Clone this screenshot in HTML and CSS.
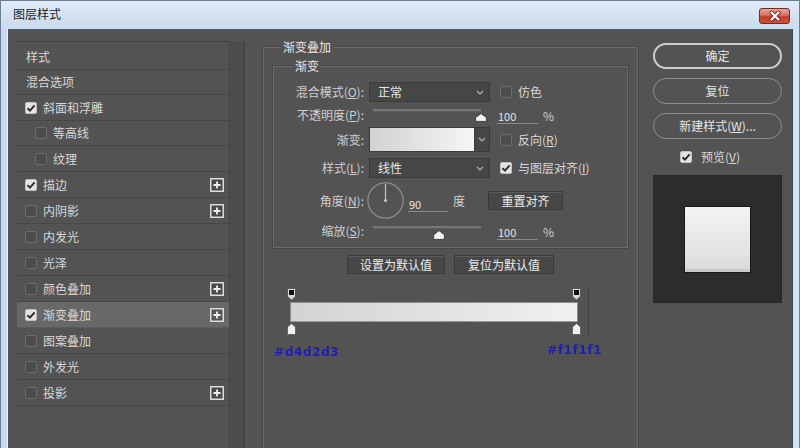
FILE: index.html
```html
<!DOCTYPE html>
<html lang="zh-CN">
<head>
<meta charset="utf-8">
<title>图层样式</title>
<link rel="stylesheet" href="styles.css">
</head>
<body>
<div class="window">
  <div class="titlebar">
    <span class="title">图层样式</span>
    <span class="close">
      <svg width="28" height="14" viewBox="0 0 28 14"><path d="M10.5 3.5 L17.5 10.5 M17.5 3.5 L10.5 10.5" stroke="#6b241c" stroke-width="4" stroke-linecap="round"/><path d="M10.5 3.5 L17.5 10.5 M17.5 3.5 L10.5 10.5" stroke="#ffffff" stroke-width="2.2" stroke-linecap="round"/></svg>
    </span>
  </div>
  <div class="frame">
    <div class="body">
      <div class="left">
        <div class="list">
          <div class="row head">样式</div>
          <div class="row head">混合选项</div>
          <div class="row"><span class="cb on"><svg width="12" height="12" viewBox="0 0 12 12"><path d="M2.5 6.2 L5 8.6 L9.6 3.4" fill="none" stroke="#2e2e2e" stroke-width="2"/></svg></span><span class="rt">斜面和浮雕</span></div>
          <div class="row sub"><span class="cb"></span><span class="rt">等高线</span></div>
          <div class="row sub"><span class="cb"></span><span class="rt">纹理</span></div>
          <div class="row"><span class="cb on"><svg width="12" height="12" viewBox="0 0 12 12"><path d="M2.5 6.2 L5 8.6 L9.6 3.4" fill="none" stroke="#2e2e2e" stroke-width="2"/></svg></span><span class="rt">描边</span><span class="plus"><svg width="14" height="14" viewBox="0 0 14 14"><rect x="0.75" y="0.75" width="12.5" height="12.5" fill="#4a4a4a" stroke="#dcdcdc" stroke-width="1.5"/><path d="M7 3.5 V10.5 M3.5 7 H10.5" stroke="#f0f0f0" stroke-width="1.8"/></svg></span></div>
          <div class="row"><span class="cb"></span><span class="rt">内阴影</span><span class="plus"><svg width="14" height="14" viewBox="0 0 14 14"><rect x="0.75" y="0.75" width="12.5" height="12.5" fill="#4a4a4a" stroke="#dcdcdc" stroke-width="1.5"/><path d="M7 3.5 V10.5 M3.5 7 H10.5" stroke="#f0f0f0" stroke-width="1.8"/></svg></span></div>
          <div class="row"><span class="cb"></span><span class="rt">内发光</span></div>
          <div class="row"><span class="cb"></span><span class="rt">光泽</span></div>
          <div class="row"><span class="cb"></span><span class="rt">颜色叠加</span><span class="plus"><svg width="14" height="14" viewBox="0 0 14 14"><rect x="0.75" y="0.75" width="12.5" height="12.5" fill="#4a4a4a" stroke="#dcdcdc" stroke-width="1.5"/><path d="M7 3.5 V10.5 M3.5 7 H10.5" stroke="#f0f0f0" stroke-width="1.8"/></svg></span></div>
          <div class="row sel"><span class="cb on"><svg width="12" height="12" viewBox="0 0 12 12"><path d="M2.5 6.2 L5 8.6 L9.6 3.4" fill="none" stroke="#2e2e2e" stroke-width="2"/></svg></span><span class="rt">渐变叠加</span><span class="plus"><svg width="14" height="14" viewBox="0 0 14 14"><rect x="0.75" y="0.75" width="12.5" height="12.5" fill="#555" stroke="#dcdcdc" stroke-width="1.5"/><path d="M7 3.5 V10.5 M3.5 7 H10.5" stroke="#f0f0f0" stroke-width="1.8"/></svg></span></div>
          <div class="row"><span class="cb"></span><span class="rt">图案叠加</span></div>
          <div class="row"><span class="cb"></span><span class="rt">外发光</span></div>
          <div class="row"><span class="cb"></span><span class="rt">投影</span><span class="plus"><svg width="14" height="14" viewBox="0 0 14 14"><rect x="0.75" y="0.75" width="12.5" height="12.5" fill="#4a4a4a" stroke="#dcdcdc" stroke-width="1.5"/><path d="M7 3.5 V10.5 M3.5 7 H10.5" stroke="#f0f0f0" stroke-width="1.8"/></svg></span></div>
        </div>
        <div class="strip"></div>
      </div>

      <div class="middle">
        <div class="group outer">
          <span class="gtitle outer-title">渐变叠加</span>
          <div class="group inner">
            <span class="gtitle inner-title">渐变</span>

            <div class="field f1">
              <span class="lbl">混合模式(<u>O</u>):</span>
              <div class="select"><span>正常</span><svg width="8" height="5" viewBox="0 0 8 5"><path d="M1 1 L4 4 L7 1" fill="none" stroke="#b4b4b4" stroke-width="1.2"/></svg></div>
              <span class="cb opt"></span><span class="opttext">仿色</span>
            </div>

            <div class="field f2">
              <span class="lbl">不透明度(<u>P</u>):</span>
              <div class="slider">
                <div class="track"></div>
                <svg class="thumb" style="margin-left:102px" width="12" height="9" viewBox="0 0 12 9"><path d="M6 0.6 L11.4 4.5 V8.4 H0.6 V4.5 Z" fill="#f4f4f4" stroke="#333" stroke-width="0.9"/></svg>
              </div>
              <span class="num">100</span><span class="unit">%</span>
            </div>

            <div class="field f3">
              <span class="lbl">渐变:</span>
              <div class="swatch"><div class="grad"></div><div class="arr"><svg width="8" height="5" viewBox="0 0 8 5"><path d="M1 1 L4 4 L7 1" fill="none" stroke="#b4b4b4" stroke-width="1.2"/></svg></div></div>
              <span class="cb opt"></span><span class="opttext">反向(<u>R</u>)</span>
            </div>

            <div class="field f4">
              <span class="lbl">样式(<u>L</u>):</span>
              <div class="select"><span>线性</span><svg width="8" height="5" viewBox="0 0 8 5"><path d="M1 1 L4 4 L7 1" fill="none" stroke="#b4b4b4" stroke-width="1.2"/></svg></div>
              <span class="cb opt on"><svg width="12" height="12" viewBox="0 0 12 12"><path d="M2.5 6.2 L5 8.6 L9.6 3.4" fill="none" stroke="#2e2e2e" stroke-width="2"/></svg></span><span class="opttext">与图层对齐(<u>I</u>)</span>
            </div>

            <div class="field f5">
              <span class="lbl">角度(<u>N</u>):</span>
              <svg class="dial" width="37" height="37" viewBox="0 0 37 37"><circle cx="18.5" cy="18.5" r="17.6" fill="none" stroke="#8c8c8c" stroke-width="1.3"/><path d="M18.5 18.5 V2" stroke="#bdbdbd" stroke-width="1.3"/><circle cx="18.5" cy="18.5" r="1.6" fill="#c4c4c4"/></svg>
              <span class="num deg">90</span><span class="unit">度</span>
              <span class="btn reset">重置对齐</span>
            </div>

            <div class="field f6">
              <span class="lbl">缩放(<u>S</u>):</span>
              <div class="slider">
                <div class="track"></div>
                <svg class="thumb" style="margin-left:60px" width="12" height="10" viewBox="0 0 12 10"><path d="M6 0.6 L11.4 4.8 V9.4 H0.6 V4.8 Z" fill="#f4f4f4" stroke="#333" stroke-width="0.9"/></svg>
              </div>
              <span class="num">100</span><span class="unit">%</span>
            </div>
          </div>

          <div class="defaults">
            <span class="btn d1">设置为默认值</span>
            <span class="btn d2">复位为默认值</span>
          </div>

          <div class="editor">
            <div class="gwrap">
              <div class="stops">
                <svg width="9" height="13" viewBox="0 0 9 13"><path d="M1.5 0.5 H7.5 A1 1 0 0 1 8.5 1.5 V8.5 L4.5 12 L0.5 8.5 V1.5 A1 1 0 0 1 1.5 0.5 Z" fill="#d8d8d8" stroke="#4a4a4a" stroke-width="0.8"/><rect x="2" y="2" width="5" height="5" fill="#111"/></svg>
                <svg width="9" height="13" viewBox="0 0 9 13"><path d="M1.5 0.5 H7.5 A1 1 0 0 1 8.5 1.5 V8.5 L4.5 12 L0.5 8.5 V1.5 A1 1 0 0 1 1.5 0.5 Z" fill="#d8d8d8" stroke="#4a4a4a" stroke-width="0.8"/><rect x="2" y="2" width="5" height="5" fill="#111"/></svg>
              </div>
              <div class="bar"></div>
              <div class="stops bottom">
                <svg width="9" height="12" viewBox="0 0 9 12"><path d="M4.5 0.5 L8.5 4 V11.5 H0.5 V4 Z" fill="#f0f0f0" stroke="#555" stroke-width="0.8"/></svg>
                <svg width="9" height="12" viewBox="0 0 9 12"><path d="M4.5 0.5 L8.5 4 V11.5 H0.5 V4 Z" fill="#f0f0f0" stroke="#555" stroke-width="0.8"/></svg>
              </div>
            </div>
            <div class="vline"></div>
          </div>

          <div class="hexes">
            <span class="hex">#d4d2d3</span>
            <span class="hex hex2">#f1f1f1</span>
          </div>
        </div>
      </div>

      <div class="right">
        <span class="pbtn default">确定</span>
        <span class="pbtn">复位</span>
        <span class="pbtn">新建样式(<u>W</u>)...</span>
        <div class="preview-check">
          <span class="cb on"><svg width="12" height="12" viewBox="0 0 12 12"><path d="M2.5 6.2 L5 8.6 L9.6 3.4" fill="none" stroke="#2e2e2e" stroke-width="2"/></svg></span>
          <span class="opttext">预览(<u>V</u>)</span>
        </div>
        <div class="preview"><div class="square"></div></div>
      </div>
    </div>
  </div>
</div>
</body>
</html>
```

FILE: styles.css
```css
* { box-sizing: border-box; }
html, body { margin: 0; padding: 0; }
body {
  width: 800px;
  height: 448px;
  overflow: hidden;
  font-family: "Noto Sans CJK SC", "Noto Sans", sans-serif;
  font-size: 12px;
  line-height: 14px;
  color: #d6d6d6;
  background: #c8dbef;
}
u { text-decoration: underline; text-underline-offset: 1px; }

.window {
  width: 800px;
  height: 448px;
  display: flex;
  flex-direction: column;
  border: 1px solid #6f7e8f;
  border-bottom: none;
  background: #c7daee;
}
.titlebar {
  height: 28px;
  flex: none;
  display: flex;
  align-items: center;
  justify-content: space-between;
  padding: 0 9px 2px 12px;
  background: linear-gradient(#e0ebf6, #c9dbee);
}
.title { color: #1b1b1b; font-size: 12px; }
.close {
  width: 31px;
  height: 16px;
  border: 1px solid #6e2b22;
  border-radius: 3px;
  background: linear-gradient(#e9a395 0%, #d5705e 45%, #c23d2a 55%, #c9543c 100%);
  display: flex;
  align-items: center;
  justify-content: center;
  margin-top: 4px;
}
.close svg { display: block; }

.frame {
  flex: 1;
  min-height: 0;
  display: flex;
  padding: 0 6px;
  background: linear-gradient(90deg, #c6d9ee, #d3e2f3);
}
.body {
  flex: 1;
  min-height: 0;
  display: flex;
  overflow: hidden;
  background: #535353;
  border-left: 1px solid #eef4fa;
  border-right: 1px solid #3d4650;
}

/* left list */
.left {
  display: flex;
  padding: 12px 0 0 9px;
  flex: none;
}
.list {
  width: 213px;
  border-top: 1px solid #434343;
  border-right: 1px solid #474747;
  padding-top: 2px;
  background: #535353;
}
.row {
  height: 26px;
  border-bottom: 1px solid #474747;
  display: flex;
  align-items: center;
  padding-left: 8px;
  color: #d8d8d8;
}
.row:nth-child(2), .row:nth-child(4) { height: 25px; }
.row.head { padding-left: 9px; }
.row.sub { padding-left: 18px; }
.row.sel { background: #686868; border-bottom-color: #5b5b5b; }
.row .rt { margin-left: 6px; }
.plus { margin-left: auto; margin-right: 5px; display: flex; }
.plus svg { display: block; }

.cb {
  width: 12px;
  height: 12px;
  flex: none;
  border: 1px solid #6c6c6c;
  border-radius: 2px;
  background: #4c4c4c;
  display: inline-flex;
}
.cb.on {
  border-color: #bfbfbf;
  background: #e4e4e4;
}
.cb svg { display: block; margin: -1px; }

.strip {
  width: 15px;
  background: #4d4d4d;
  border-right: 2px solid #454545;
}

/* middle */
.middle {
  width: 375px;
  flex: none;
  margin-left: 18px;
  padding-top: 18px;
}
.group {
  border: 1px solid #6a6a6a;
  box-shadow: 0 0 0 1px #464646;
}
.group.outer {
  height: 430px;
  padding: 0 9px;
}
.gtitle {
  display: block;
  width: fit-content;
  margin-top: -8px;
  padding: 0 2px;
  background: #535353;
  color: #e4e4e4;
  line-height: 14px;
}
.outer-title { margin-left: 8px; }
.group.inner {
  margin-top: 12px;
  padding-bottom: 6px;
}
.inner-title { margin-left: 19px; }

.field {
  display: flex;
  align-items: center;
  height: 20px;
}
.lbl {
  width: 90px;
  flex: none;
  text-align: right;
  color: #cfcfcf;
  margin-right: 5px;
}
.f1 { margin-top: 9px; }
.f2 { margin-top: 3px; align-items: flex-start; }
.f2 .lbl { margin-top: 3px; }
.f3 { margin-top: 2px; height: 25px; }
.f4 { margin-top: 6px; }
.f5 { margin-top: 4px; height: 37px; }
.f6 { margin-top: 2px; align-items: flex-start; }
.f6 .lbl { margin-top: 3px; }

.select {
  width: 121px;
  height: 20px;
  flex: none;
  background: #464646;
  border: 1px solid #3b3b3b;
  display: flex;
  align-items: center;
  justify-content: space-between;
  padding: 0 5px 0 8px;
  color: #e8e8e8;
}
.select svg, .arr svg { display: block; }
.opt { margin-left: 10px; }
.opttext { margin-left: 6px; color: #d8d8d8; }

.slider {
  width: 121px;
  flex: none;
  display: flex;
  flex-direction: column;
  align-items: flex-start;
  padding-left: 4px;
}
.track {
  width: 108px;
  height: 3px;
  margin-top: 4px;
  background: #777;
  border-bottom: 1px solid #5e5e5e;
}
.f6 .track { margin-top: 5px; }
.thumb { display: block; margin-top: 1px; }
.num {
  width: 41px;
  margin-left: 7px;
  padding-left: 1px;
  border-bottom: 1px solid #8a8a8a;
  color: #e6e6e6;
  font-size: 11px;
  line-height: 14px;
  flex: none;
}
.f2 .num, .f6 .num { margin-top: 4px; }
.unit { margin-left: 5px; color: #d0d0d0; }
.f2 .unit, .f6 .unit { margin-top: 4px; }

.swatch {
  width: 121px;
  height: 25px;
  flex: none;
  display: flex;
  border: 1px solid #3a3a3a;
}
.grad {
  flex: 1;
  background: linear-gradient(90deg, #d3d1d2, #f6f6f6);
  border-right: 1px solid #3a3a3a;
}
.arr {
  width: 14px;
  background: #464646;
  display: flex;
  align-items: center;
  justify-content: center;
}

.dial { display: block; margin-left: -2px; flex: none; }
.num.deg { width: 40px; margin-left: 4px; margin-top: 7px; }
.f5 .unit { margin-left: 5px; margin-top: 1px; }

.btn {
  height: 19px;
  display: flex;
  align-items: center;
  justify-content: center;
  background: #474747;
  border: 1px solid #3a3a3a;
  box-shadow: inset 0 1px 0 #5a5a5a;
  color: #ececec;
  flex: none;
}
.reset { width: 75px; margin-left: 23px; height: 19px; }

.defaults {
  display: flex;
  justify-content: center;
  gap: 9px;
  margin-top: 7px;
}
.d1 { width: 98px; }
.d2 { width: 100px; }

.editor {
  display: flex;
  align-items: flex-start;
  margin-top: 14px;
  margin-left: 17px;
}
.gwrap { width: 288px; flex: none; }
.stops {
  display: flex;
  justify-content: space-between;
  margin: 0 -3px;
  height: 13px;
}
.stops svg { display: block; }
.stops.bottom { height: 12px; margin-top: 1px; }
.bar {
  height: 20px;
  margin-top: 1px;
  border: 1px solid #8e8e8e;
  border-bottom-color: #9a9a9a;
  background: linear-gradient(90deg, #d4d2d3, #f1f1f1);
}
.vline {
  width: 1px;
  height: 48px;
  margin-left: 10px;
  background: #444;
}

.hexes {
  display: flex;
  justify-content: space-between;
  align-items: flex-start;
  width: 328px;
  margin: 9px 0 0 1px;
}
.hex {
  font-family: "DejaVu Sans", sans-serif;
  font-weight: bold;
  font-size: 12px;
  line-height: 14px;
  letter-spacing: 0.6px;
  color: #1f1fb8;
}
.hex2 { margin-top: -2px; }

/* right */
.right {
  width: 129px;
  flex: none;
  margin-left: 15px;
  padding-top: 14px;
  display: flex;
  flex-direction: column;
}
.pbtn {
  height: 26px;
  margin-bottom: 9px;
  border-radius: 13px;
  border: 1.5px solid #8d8d8d;
  display: flex;
  align-items: center;
  justify-content: center;
  color: #e6e6e6;
}
.pbtn.default { border: 2px solid #cdcdcd; }
.preview-check {
  display: flex;
  align-items: center;
  padding-left: 27px;
  margin-top: 2px;
  height: 14px;
}
.preview-check .opttext { margin-left: 9px; }
.preview {
  height: 128px;
  margin-top: 11px;
  background: #2c2c2c;
  border: 1px solid #282828;
  display: flex;
  align-items: center;
  justify-content: center;
}
.square {
  width: 65px;
  height: 65px;
  background: linear-gradient(#f4f4f4, #e4e3e3 70%, #d9d8d8);
  box-shadow: 0 0 0 1px #1a1a1a, inset 0 -3px 0 #c9c9c9;
}
```
